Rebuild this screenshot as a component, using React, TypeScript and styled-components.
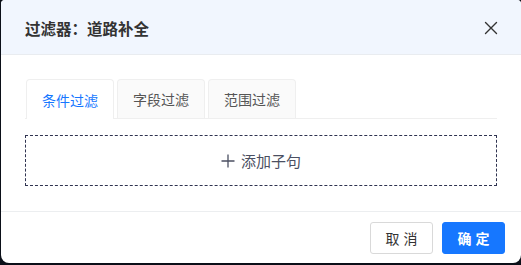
import React, { useState } from 'react'
import styled, { createGlobalStyle } from 'styled-components'

const GlobalStyle = createGlobalStyle`
  html, body {
    margin: 0;
    padding: 0;
    background: #0b0f18;
    height: 265px;
    overflow: hidden;
  }
  body {
    font-family: "Noto Sans CJK SC", "Noto Sans", sans-serif;
  }
`;

const Modal = styled.div`
  margin-left: 1px;
  width: 520px;
  height: 263px;
  background: #fff;
  border-radius: 4px 4px 8px 8px;
  overflow: hidden;
  display: flex;
  flex-direction: column;
`;

const Header = styled.div`
  height: 55px;
  box-sizing: border-box;
  padding: 0 20px 0 24px;
  background: #f1f6fe;
  border-bottom: 1px solid #e9ecf0;
  display: flex;
  align-items: center;
  justify-content: space-between;
`;

const Title = styled.div`
  font-size: 15.5px;
  font-weight: 700;
  color: #333;
  padding-top: 2px;
`;

const CloseButton = styled.button`
  border: none;
  background: transparent;
  padding: 0;
  width: 20px;
  height: 20px;
  display: flex;
  align-items: center;
  justify-content: center;
  cursor: pointer;
  color: #333;
  margin-top: 2px;
`;

const Body = styled.div`
  flex: 1;
  padding: 24px 24px 0 24px;
`;

const TabBar = styled.div`
  display: flex;
  gap: 3px;
  border-bottom: 1px solid #efefef;
  padding-left: 1px;
`;

const Tab = styled.div<{ $active?: boolean }>`
  width: 88px;
  box-sizing: border-box;
  display: flex;
  align-items: center;
  justify-content: center;
  font-size: 14px;
  color: ${p => (p.$active ? '#1677ff' : '#555')};
  background: ${p => (p.$active ? '#fff' : '#fafafa')};
  border: 1px solid #efefef;
  border-bottom: none;
  border-radius: 4px 4px 0 0;
  margin-bottom: ${p => (p.$active ? '-1px' : '0')};
  height: ${p => (p.$active ? '40px' : '39px')};
  cursor: pointer;
`;

const AddClause = styled.div`
  margin-top: 16px;
  height: 51px;
  box-sizing: border-box;
  border: 1px dashed #2f3350;
  display: flex;
  align-items: center;
  justify-content: center;
  gap: 6px;
  font-size: 15px;
  color: #4b4f62;
  cursor: pointer;
`;

const Footer = styled.div`
  height: 52px;
  box-sizing: border-box;
  border-top: 1px solid #eceef0;
  display: flex;
  justify-content: flex-end;
  align-items: flex-start;
  gap: 9px;
  padding: 10px 16px 0 0;
`;

const Button = styled.button<{ $primary?: boolean }>`
  width: 63px;
  height: 32px;
  box-sizing: border-box;
  border-radius: 3px;
  font-family: inherit;
  font-size: 14px;
  letter-spacing: 4px;
  text-indent: 4px;
  cursor: pointer;
  border: 1px solid ${p => (p.$primary ? '#1677ff' : '#d9d9d9')};
  background: ${p => (p.$primary ? '#1677ff' : '#fff')};
  color: ${p => (p.$primary ? '#fff' : '#333')};
  font-weight: ${p => (p.$primary ? 700 : 400)};
`;

const tabs = ['条件过滤', '字段过滤', '范围过滤']

export default function App() {
  const [active, setActive] = useState(0)
  return (
    <>
      <GlobalStyle />
      <Modal>
        <Header>
          <Title>过滤器：道路补全</Title>
          <CloseButton>
            <svg width="14" height="14" viewBox="0 0 14 14" fill="none" stroke="currentColor" strokeWidth="1.4" strokeLinecap="round">
              <path d="M1.5 1.5 L12.5 12.5 M12.5 1.5 L1.5 12.5" />
            </svg>
          </CloseButton>
        </Header>
        <Body>
          <TabBar>
            {tabs.map((t, i) => (
              <Tab key={t} $active={i === active} onClick={() => setActive(i)}>
                {t}
              </Tab>
            ))}
          </TabBar>
          <AddClause>
            <svg width="14" height="14" viewBox="0 0 14 14" fill="none" stroke="currentColor" strokeWidth="1.3">
              <path d="M7 0.5 V13.5 M0.5 7 H13.5" />
            </svg>
            添加子句
          </AddClause>
        </Body>
        <Footer>
          <Button>取消</Button>
          <Button $primary>确定</Button>
        </Footer>
      </Modal>
    </>
  )
}
